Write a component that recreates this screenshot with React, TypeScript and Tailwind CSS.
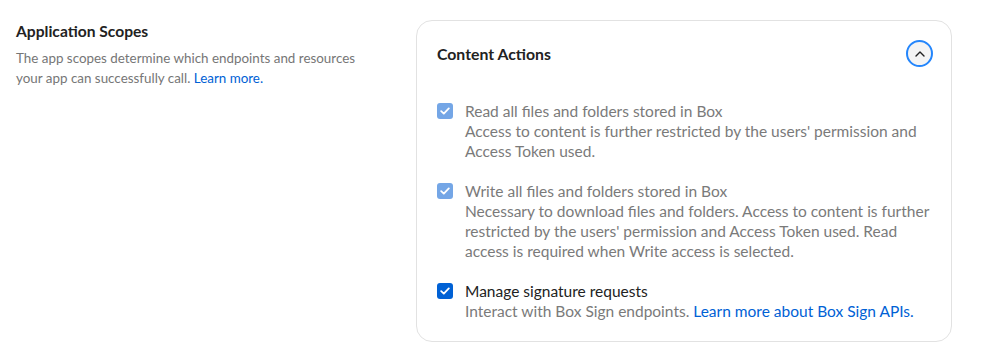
import React from "react";

interface Scope {
  title: string;
  description: React.ReactNode;
  disabled?: boolean;
}

const SCOPES: Scope[] = [
  {
    title: "Read all files and folders stored in Box",
    description:
      "Access to content is further restricted by the users' permission and Access Token used.",
    disabled: true,
  },
  {
    title: "Write all files and folders stored in Box",
    description:
      "Necessary to download files and folders. Access to content is further restricted by the users' permission and Access Token used. Read access is required when Write access is selected.",
    disabled: true,
  },
  {
    title: "Manage signature requests",
    description: (
      <>
        Interact with Box Sign endpoints.{" "}
        <a href="#" className="text-[#0061d5]">
          Learn more about Box Sign APIs.
        </a>
      </>
    ),
  },
];

function Checkbox({ disabled = false }: { disabled?: boolean }) {
  return (
    <span
      className={`mt-[2px] flex h-4 w-4 shrink-0 items-center justify-center rounded-[3px] ${
        disabled ? "bg-[#74a6e6]" : "bg-[#0061d5]"
      }`}
    >
      <svg width="10" height="8" viewBox="0 0 10 8" fill="none">
        <path
          d="M1.2 4.2 L3.8 6.6 L8.8 1.4"
          stroke="#fff"
          strokeWidth="1.8"
          strokeLinecap="round"
          strokeLinejoin="round"
        />
      </svg>
    </span>
  );
}

export default function App() {
  return (
    <div
      className="flex h-[357px] w-[1002px] bg-white pl-4 pt-5"
      style={{ fontFamily: "Lato, 'Noto Sans', sans-serif" }}
    >
      <div className="w-[400px] shrink-0">
        <h2 className="text-[15.6px] font-bold leading-[22px] text-[#222]">
          Application Scopes
        </h2>
        <p className="mt-[6px] w-[350px] text-[13.4px] leading-[20px] text-[#767676]">
          The app scopes determine which endpoints and resources your app can
          successfully call.{" "}
          <a href="#" className="text-[#0061d5]">
            Learn more.
          </a>
        </p>
      </div>

      <div className="h-[322px] w-[536px] shrink-0 rounded-2xl border border-[#e2e2e2] pb-5 pl-5 pr-[18px]">
        <div className="flex items-center justify-between pt-[19px]">
          <h3 className="text-[15.8px] font-bold leading-[26px] text-[#222]">
            Content Actions
          </h3>
          <button className="flex h-[27px] w-[27px] items-center justify-center rounded-full border-2 border-[#2486fc] bg-[#f4f4f4]">
            <svg width="10" height="6" viewBox="0 0 10 6" fill="none">
              <path
                d="M1 5 L5 1 L9 5"
                stroke="#222"
                strokeWidth="1.4"
                strokeLinecap="round"
                strokeLinejoin="round"
              />
            </svg>
          </button>
        </div>

        <div className="mt-[34px] flex flex-col gap-5">
          {SCOPES.map((s) => (
            <label key={s.title} className="flex gap-3">
              <Checkbox disabled={s.disabled} />
              <div className="text-[15.5px] leading-[20px]">
                <div className={s.disabled ? "text-[#7a7a7a]" : "text-[#222]"}>
                  {s.title}
                </div>
                <div className="text-[#7a7a7a]">{s.description}</div>
              </div>
            </label>
          ))}
        </div>
      </div>
    </div>
  );
}
